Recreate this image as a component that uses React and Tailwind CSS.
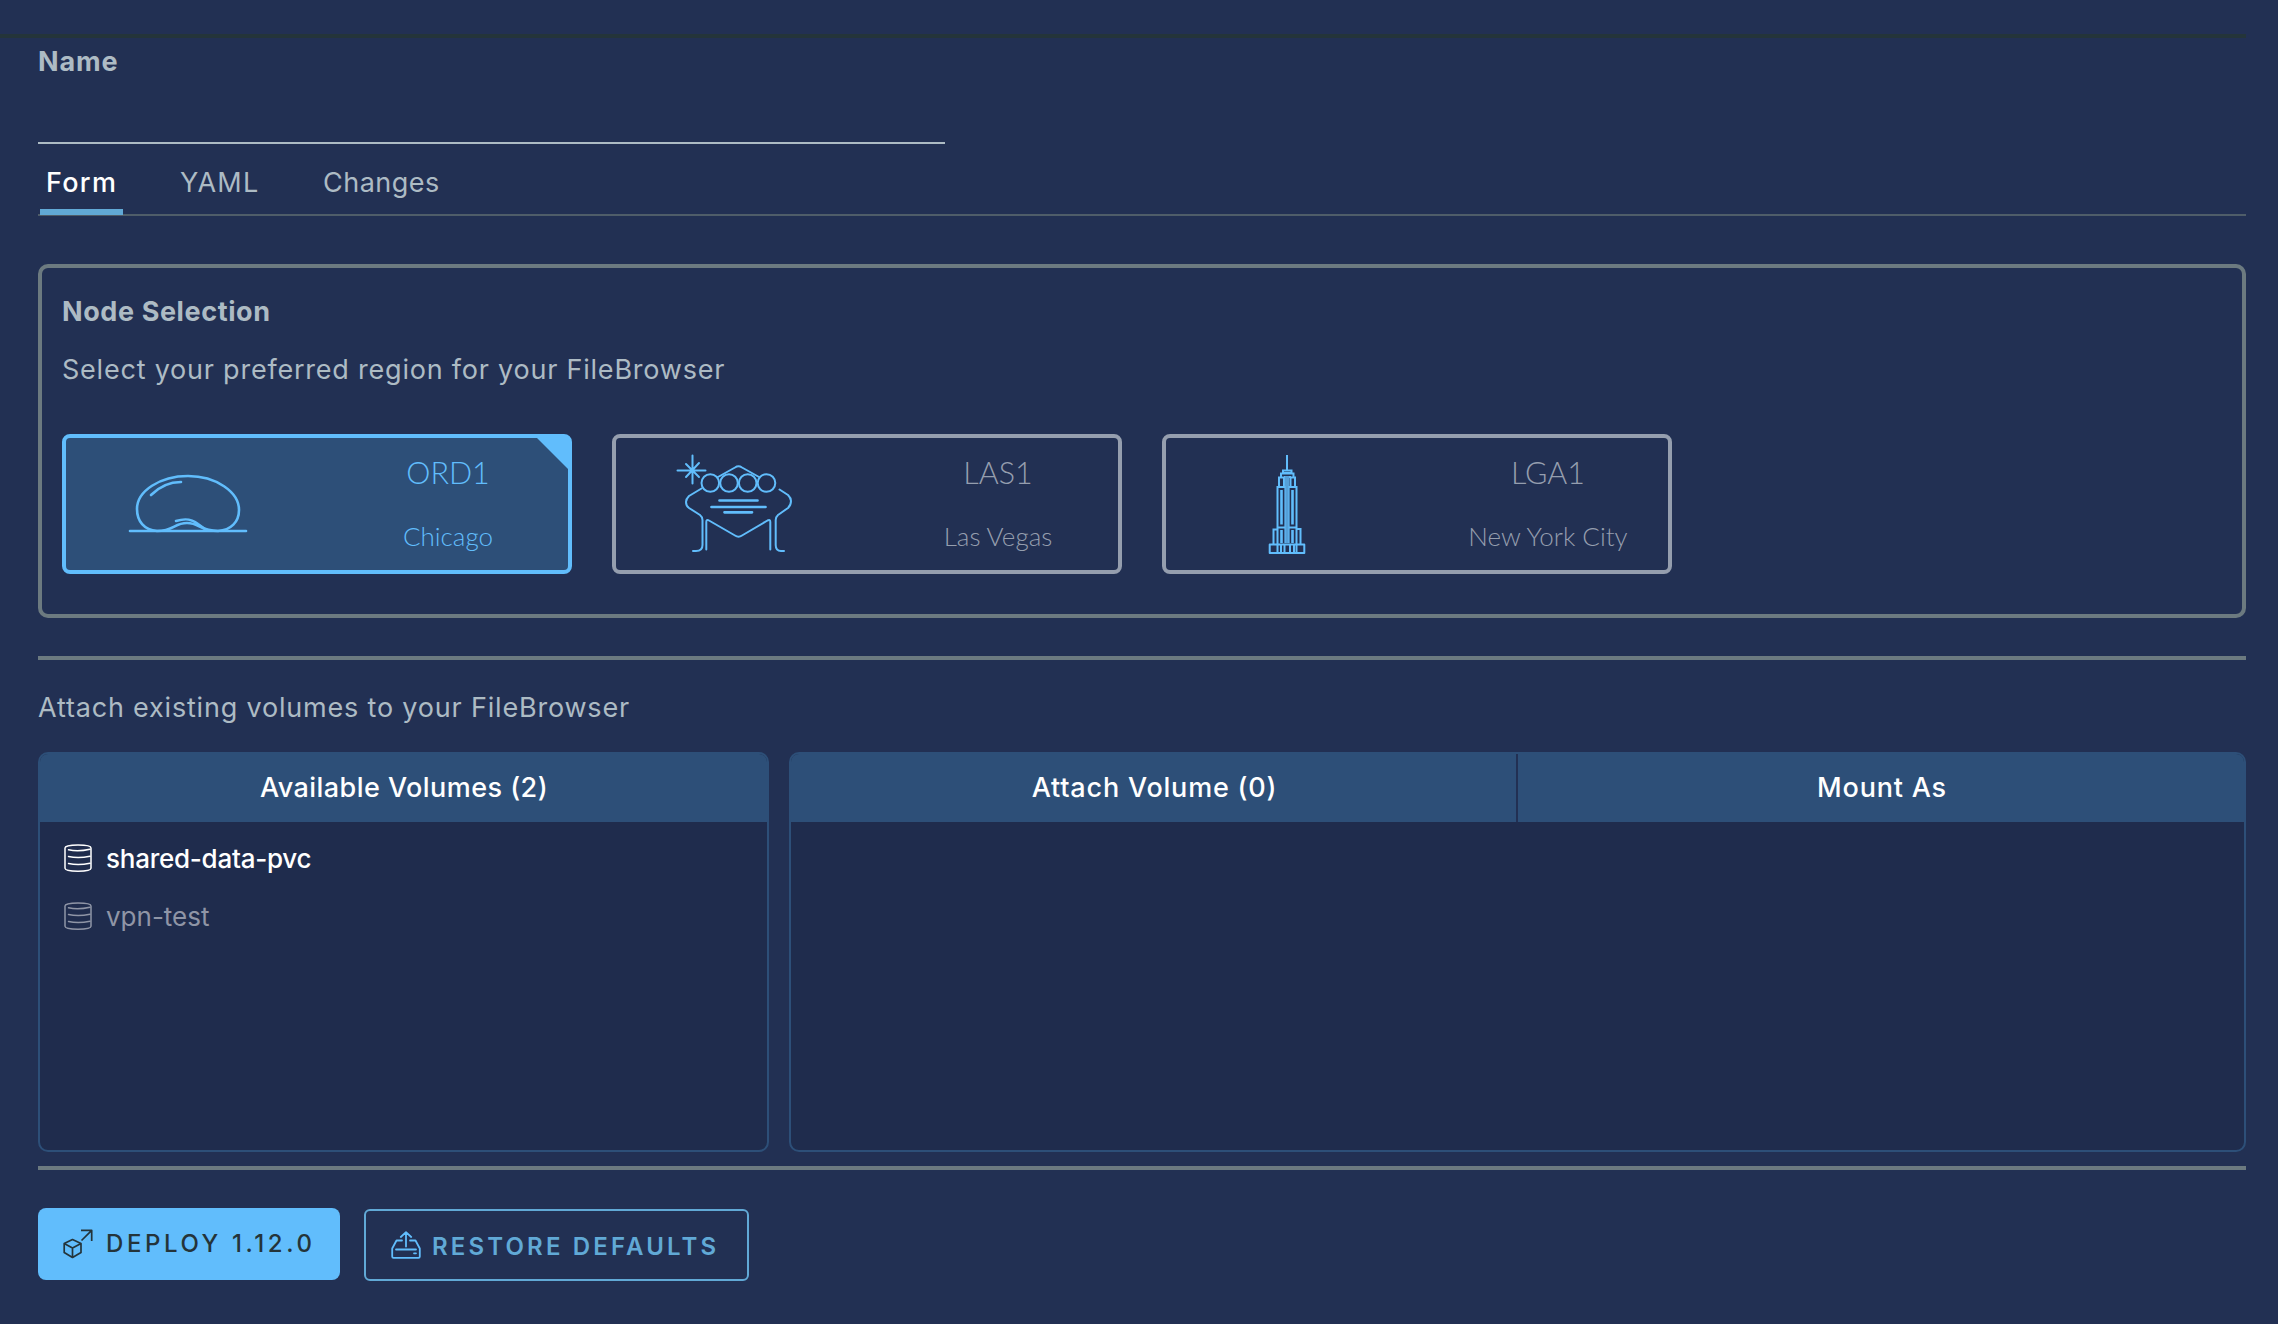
const Bean = () => (
  <svg className="w-[160px] h-[100px]" viewBox="0 0 160 100" fill="none" stroke="#61bdfc" strokeWidth="2.6" strokeLinecap="round">
    <path d="M20 81H136" />
    <path d="M47 81C34 80 27 71 27 59C27 41 50 26 78 26C106 26 129 42 129 60C129 72 121 80 108 81C90 81 90 73 77 73C64 73 64 81 47 81Z" />
    <path d="M41 45C49 37 59 32 71 32" />
    <path d="M66 71C76 68 82 69 88 74L95 79" />
  </svg>
);

const VegasSign = () => (
  <svg className="w-[150px] h-[125px]" viewBox="0 0 150 125" fill="none" stroke="#61bdfc" strokeWidth="2" strokeLinecap="round" strokeLinejoin="round">
    <path d="M32.500 15.500V43.500M17.500 30.500H45.500M26 24L39 37M39 23L26 37" />
    <circle cx="50.300" cy="43" r="8.800" />
    <circle cx="69" cy="43" r="8.800" />
    <circle cx="87.700" cy="43" r="8.800" />
    <circle cx="106.500" cy="43" r="8.800" />
    <path d="M58 37L75 27.500Q78.500 25 82 27.500L99 37" />
    <path d="M41.500 48.500L29 56Q26 59 26 62Q26 66 29 68L40 75Q42.500 77 42.500 80V105Q42.500 111 36 111H33" />
    <path d="M119.500 49.500L128 55Q131 58 131 61Q131 65 128 68L118 75Q115.700 77 115.700 80V105Q115.700 111 121 111H124" />
    <path d="M46.300 109.500V82Q46.300 79 49 80.500L75 95.500Q78.500 98 82 95.500L107.500 80.500Q110.300 79 110.300 82V109.500" />
    <path d="M59.500 60.500H97.500M51.500 67H105.500M64.500 72.300H92" strokeWidth="2.700" />
  </svg>
);

const Tower = () => (
  <svg className="w-[80px] h-[125px]" viewBox="0 0 80 125" fill="none" stroke="#61bdfc" strokeWidth="2">
    <path d="M37 15V30" />
    <path d="M33 30.500H41.500V33H33ZM31 37V33.500H43.500V37" />
    <path d="M29 46V37.500H34V46M40.500 46V37.500H45V46M34 37H41" />
    <path d="M27.500 113V47H46.500V113M27 87.500H47" />
    <path d="M31.500 50V84.500M42.500 50V84.500M31.500 90V103M42.500 90V103" strokeWidth="2.600" />
    <path d="M37 36V103" stroke="#559fd8" strokeWidth="4.500" />
    <path d="M35 46V103M39 46V103" strokeWidth="1" />
    <path d="M27.500 89.500H23.500V104M46.500 89H50.500V104" />
    <path d="M19.700 104.500H54.300V113H19.700ZM31 104V113M34.500 104V113M40 104V113M44 104V113" strokeWidth="2" strokeLinejoin="round" />
  </svg>
);

const Database = ({ className }) => (
  <svg className={className} viewBox="0 0 28 28" fill="none" stroke="currentColor" strokeWidth="1.500" strokeLinecap="round">
    <path d="M1 4C1 2.200 6 1 14 1S27 2.200 27 4V24.300C27 26 22 27.200 14 27.200S1 26 1 24.300Z" />
    <path d="M4.500 5.800Q14 8 26 5.300M4.500 12.500Q14 14.800 26 12.300M4.500 19.500Q14 21.800 26 19.300" />
  </svg>
);

const DeployIcon = () => (
  <svg className="w-[30px] h-[30px] shrink-0" viewBox="0 0 30 30" fill="none" stroke="#24343a" strokeWidth="1.700" strokeLinejoin="round">
    <path d="M9.500 10.500L18 14.500V23.500L9.500 28.500L1.200 23.500V14.500ZM1.200 14.500L9.500 19L18 14.500M9.500 19V28.500" />
    <path d="M18 1.300H28.700V12M28.700 1.300L18.500 11.500" />
  </svg>
);

const RestoreIcon = () => (
  <svg className="w-[30px] h-[28px] shrink-0" viewBox="0 0 30 28" fill="none" stroke="#61bdfc" strokeWidth="1.800" strokeLinejoin="round" strokeLinecap="round">
    <path d="M11 9.500H5.500L1.200 17.500V25.500Q1.200 26.800 2.500 26.800H27.500Q28.800 26.800 28.800 25.500V17.500L24.500 9.500H19" />
    <path d="M15 15.500V1.200M9.800 6L15 1.200L20.200 6M5 18.500H25M23 22.300H25" />
  </svg>
);

const regions = [
  { code: "ORD1", city: "Chicago", icon: <Bean />, pad: "pl-[44px] pb-[8px]", active: true },
  { code: "LAS1", city: "Las Vegas", icon: <VegasSign />, pad: "pl-[44px] pb-[3px]" },
  { code: "LGA1", city: "New York City", icon: <Tower />, pad: "pl-[84px] pb-[3px]" },
];

const RegionCard = ({ code, city, icon, pad, active }) => (
  <div
    className={
      active
        ? "relative flex w-[510px] h-[140px] rounded-lg border-4 border-[#61bdfc] bg-[#2d4f78] text-[#61bdfc]"
        : "relative flex w-[510px] h-[140px] rounded-lg border-4 border-[#959eae] text-[#959eae]"
    }
  >
    <div className={"flex w-[259px] items-center " + pad}>{icon}</div>
    <div className="flex w-[243px] flex-col items-center pl-[3px] font-['Lato'] font-light">
      <div className="mt-[16px] text-[30.500px] leading-9">{code}</div>
      <div className="mt-[30px] text-[26px] leading-8">{city}</div>
    </div>
    {active && (
      <svg className="absolute right-0 top-0 w-[31px] h-[31px]" viewBox="0 0 31 31">
        <path d="M0 0H31V31Z" fill="#61bdfc" />
      </svg>
    )}
  </div>
);

export default function App() {
  return (
    <div className="flex h-[1324px] w-[2278px] flex-col bg-[#223053] font-['Inter',sans-serif] text-[27px] leading-8 text-[#adbbc4]">
      <div className="mt-[34px] mr-8 h-1 shrink-0 bg-[#24343a]" />
      <div className="flex flex-col pl-[38px] pr-8">
        <label className="mt-2 h-8 font-bold tracking-[0.9px]">Name</label>
        <div className="mt-16 h-0.5 w-[907px] bg-[#adbbc4]" />

        <nav className="flex h-[72px] border-b-2 border-[#4f5d69] pl-0.5">
          <div className="relative z-10 mt-[23px] h-12 w-[83px] border-b-[6px] border-[#61a9d6] pl-[6px] font-medium tracking-[1.300px] text-white">Form</div>
          <div className="mt-[23px] ml-[57px] w-[143px] tracking-[1.200px]">YAML</div>
          <div className="mt-[23px] tracking-[0.500px]">Changes</div>
        </nav>

        <section className="mt-12 flex h-[354px] flex-col rounded-[10px] border-4 border-[#6c7a80] pl-5">
          <h2 className="mt-7 h-8 font-bold tracking-[0.600px]">Node Selection</h2>
          <p className="mt-[26px] h-8 tracking-[0.780px]">Select your preferred region for your FileBrowser</p>
          <div className="mt-12 flex gap-10">
            {regions.map((r) => (
              <RegionCard key={r.code} {...r} />
            ))}
          </div>
        </section>

        <div className="mt-[38px] h-1 bg-[#6c7a80]" />
        <p className="mt-8 h-8 tracking-[0.810px]">Attach existing volumes to your FileBrowser</p>

        <div className="mt-7 flex h-[400px] gap-5 text-white">
          <div className="w-[731px] overflow-hidden rounded-[10px] border-2 border-[#2d4f78] bg-[#1f2c4d]">
            <div className="flex h-[68px] items-center justify-center bg-[#2d4f78] pl-px font-medium tracking-[0.450px]">Available Volumes (2)</div>
            <div className="mt-[20px] flex h-8 items-center gap-[14px] pl-6 text-[26px]">
              <Database className="size-7" />
              <span className="pt-0.5 font-medium tracking-[-0.250px]">shared-data-pvc</span>
            </div>
            <div className="mt-[26px] flex h-8 items-center gap-[14px] pl-6 text-[26px] text-[#8f95a6]">
              <Database className="size-7" />
              <span className="pt-0.5">vpn-test</span>
            </div>
          </div>
          <div className="flex-1 overflow-hidden rounded-[10px] border-2 border-[#2d4f78] bg-[#1f2c4d]">
            <div className="flex h-[68px] bg-[#2d4f78] font-medium tracking-[0.800px]">
              <div className="flex w-[727px] items-center justify-center border-r-2 border-[#223053] pl-0.5">Attach Volume (0)</div>
              <div className="flex flex-1 items-center justify-center pl-0.5">Mount As</div>
            </div>
          </div>
        </div>

        <div className="mt-[14px] h-1 bg-[#6c7a80]" />

        <div className="mt-[38px] flex items-start gap-6">
          <button className="flex h-[72px] w-[302px] items-center gap-[13px] rounded-lg bg-[#61bdfc] pl-[25px] text-[24px] font-medium tracking-[3.600px] text-[#24343a]">
            <DeployIcon />
            <span className="whitespace-nowrap pb-px">DEPLOY 1.12.0</span>
          </button>
          <button className="mt-px flex h-[72px] w-[385px] items-center gap-[11px] rounded-md border-2 border-[#61a9d6] pl-[25px] text-[24px] font-semibold tracking-[3.150px] text-[#61a9d6]">
            <RestoreIcon />
            <span className="whitespace-nowrap pt-[3px]">RESTORE DEFAULTS</span>
          </button>
        </div>
      </div>
    </div>
  );
}
